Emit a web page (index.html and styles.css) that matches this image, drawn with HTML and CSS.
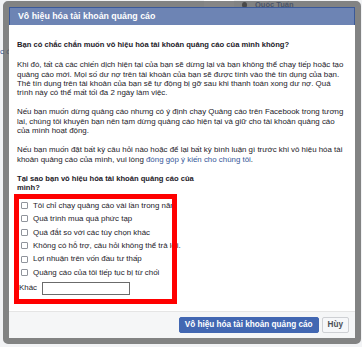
FILE: index.html
```html
<!DOCTYPE html>
<html lang="vi">
<head>
  <meta charset="UTF-8" />
  <meta name="viewport" content="width=device-width, initial-scale=1.0"/>
  <title>Vô hiệu hóa tài khoản quảng cáo</title>
  <link rel="stylesheet" href="styles.css">
</head>
<body>
  <!-- trang phía sau hộp thoại -->
  <div class="page">
    <div class="topbar">
      <span class="tab"></span>
      <span class="avatar"></span>
      <span class="user">Quốc Tuấn</span>
    </div>
    <div class="page-side">c đ</div>
  </div>

  <div class="modal">
    <div class="dialog">
      <div class="dialog-header">Vô hiệu hóa tài khoản quảng cáo</div>

      <div class="dialog-body">
        <p class="lead">Bạn có chắc chắn muốn vô hiệu hóa tài khoản quảng cáo của mình không?</p>
        <p>Khi đó, tất cả các chiến dịch hiện tại của bạn sẽ dừng lại và bạn không thể chạy tiếp hoặc tạo quảng cáo mới. Mọi số dư nợ trên tài khoản của bạn sẽ được tính vào thẻ tín dụng của bạn. Thẻ tín dụng trên tài khoản của bạn sẽ tự động bị gỡ sau khi thanh toán xong dư nợ. Quá trình này có thể mất tối đa 2 ngày làm việc.</p>
        <p>Nếu bạn muốn dừng quảng cáo nhưng có ý định chạy Quảng cáo trên Facebook trong tương lai, chúng tôi khuyên bạn nên tạm dừng quảng cáo hiện tại và giữ cho tài khoản quảng cáo của mình hoạt động.</p>
        <p>Nếu bạn muốn đặt bất kỳ câu hỏi nào hoặc để lại bất kỳ bình luận gì trước khi vô hiệu hóa tài khoản quảng cáo của mình, vui lòng <a href="#">đóng góp ý kiến cho chúng tôi</a>.</p>

        <div class="reasons">
          <h4>Tại sao bạn vô hiệu hóa tài khoản quảng cáo của mình?</h4>
          <div class="reason-list">
            <label class="reason"><span class="box"></span>Tôi chỉ chạy quảng cáo vài lần trong năm</label>
            <label class="reason"><span class="box"></span>Quá trình mua quá phức tạp</label>
            <label class="reason"><span class="box"></span>Quá đắt so với các tùy chọn khác</label>
            <label class="reason"><span class="box"></span>Không có hỗ trợ, câu hỏi không thể trả lời.</label>
            <label class="reason"><span class="box"></span>Lợi nhuận trên vốn đầu tư thấp</label>
            <label class="reason"><span class="box"></span>Quảng cáo của tôi tiếp tục bị từ chối</label>
            <div class="other">Khác <span class="other-input"></span></div>
            <!-- khung đánh dấu màu đỏ -->
            <div class="mark"></div>
          </div>
        </div>
      </div>

      <div class="dialog-footer">
        <button class="btn btn-primary">Vô hiệu hóa tài khoản quảng cáo</button>
        <button class="btn">Hùy</button>
      </div>
    </div>
  </div>
</body>
</html>
```

FILE: styles.css
```css
* {
  margin: 0;
  padding: 0;
  box-sizing: border-box;
  font-family: "Liberation Sans", Arial, sans-serif;
}

body {
  background: #f2f3f5;
  width: 362px;
  height: 347px;
  overflow: hidden;
  position: relative;
}

/* trang phía sau */
.topbar {
  height: 9px;
  display: flex;
  align-items: center;
  padding-left: 204px;
  gap: 8px;
}

.tab {
  width: 30px;
  height: 9px;
  background: #ffffff;
}

.avatar {
  width: 5px;
  height: 6px;
  border-radius: 50%;
  background: #333;
}

.user {
  color: #365899;
  font-size: 7.5px;
  font-weight: bold;
}

.page-side {
  margin-top: 38px;
  font-size: 8px;
  color: #365899;
}

/* hộp thoại */
.modal {
  position: absolute;
  left: 3px;
  top: 1px;
  width: 358px;
  border: 6px solid rgba(82, 82, 82, 0.7);
  border-radius: 5px;
}

.dialog {
  background: #fff;
}

.dialog-header {
  background: #6d84b4;
  border: 1px solid #3b5998;
  border-bottom: none;
  color: #fff;
  font-size: 8.8px;
  font-weight: bold;
  height: 18px;
  line-height: 17px;
  padding-left: 8px;
}

.dialog-body {
  padding: 15px 7px 16px 8px;
  color: #1d2129;
  font-size: 7.9px;
  line-height: 9.3px;
}

.dialog-body p {
  margin-bottom: 10px;
}

.dialog-body .lead {
  font-size: 7.6px;
  font-weight: bold;
  margin-bottom: 11px;
}

.dialog-body a {
  color: #365899;
  text-decoration: none;
}

.reasons h4 {
  font-size: 7.6px;
  width: 182px;
  margin-bottom: 8px;
}

.reason-list {
  position: relative;
  display: flex;
  flex-direction: column;
  gap: 3.4px;
  padding-left: 4px;
}

.reason {
  display: flex;
  align-items: center;
  gap: 5px;
  height: 10px;
  white-space: nowrap;
}

.box {
  width: 7px;
  height: 7px;
  border: 1px solid #90949c;
  border-radius: 1px;
  background: #fff;
}

.other {
  display: flex;
  align-items: center;
  gap: 5px;
  margin-top: 0.7px;
  margin-left: -2px;
}

.other-input {
  width: 88px;
  height: 13px;
  border: 1px solid #6b6b6b;
}

.mark {
  position: absolute;
  left: -3px;
  top: -6.7px;
  width: 163px;
  height: 110px;
  border: 5px solid #ff0000;
}

.dialog-footer {
  background: #f5f6f7;
  border-top: 1px solid #e5e5e5;
  display: flex;
  justify-content: flex-end;
  align-items: center;
  gap: 3px;
  height: 27px;
  padding-right: 6px;
}

.btn {
  height: 16px;
  padding: 0 5px;
  border: 1px solid #ced0d4;
  border-radius: 2px;
  background: #f6f7f9;
  color: #4b4f56;
  font-size: 8.2px;
  font-weight: bold;
}

.btn-primary {
  background: #4267b2;
  border-color: #4267b2;
  color: #fff;
}
```
